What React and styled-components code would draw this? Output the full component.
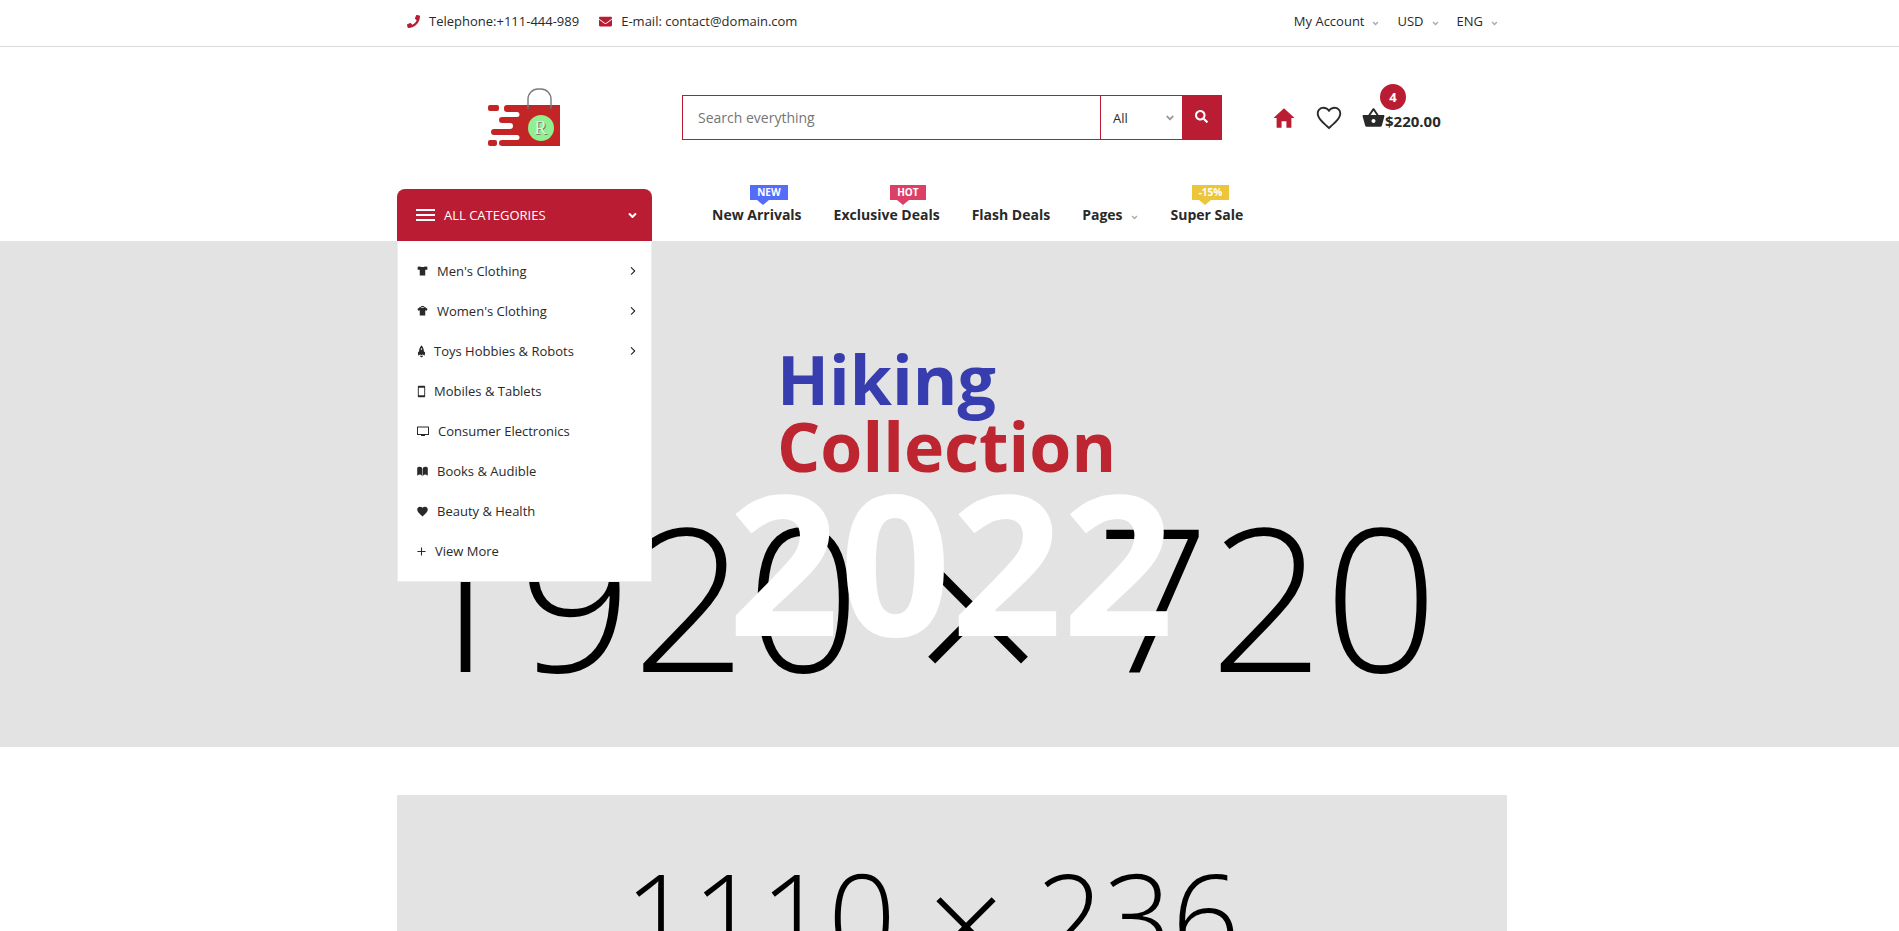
import React from "react";
import styled, { createGlobalStyle } from "styled-components";
import { FaPhone, FaEnvelope, FaSearch, FaAngleDown } from "react-icons/fa";
import {
  IoMdHome,
  IoMdHeartEmpty,
  IoMdBasket,
  IoMdPhonePortrait,
  IoIosBook,
  IoMdHeart,
  IoMdAdd,
  IoMdRocket,
  IoIosArrowForward,
} from "react-icons/io";

const red = "#b91c33";
const ink = "#292929";
const gray = "#e3e3e3";

const GlobalStyle = createGlobalStyle`
  *, *::before, *::after { box-sizing: border-box; }
  body {
    margin: 0;
    background: #fff;
    color: ${ink};
    font-family: "Open Sans", "Noto Sans", sans-serif;
    font-size: 13px;
    line-height: 20px;
    overflow-x: hidden;
  }
  a { color: inherit; text-decoration: none; }
  ul { list-style: none; margin: 0; padding: 0; }
  button, input, select { font: inherit; }
`;

const Page = styled.div`
  padding-left: 5px;
`;

const Container = styled.div`
  max-width: 1110px;
  margin: 0 auto;
`;

const FullWidth = styled.div`
  margin-left: -5px;
  padding-left: 5px;
`;

const TopBar = styled(FullWidth)`
  border-bottom: 1px solid #dadada;
`;

const TopBarInner = styled(Container)`
  display: flex;
  justify-content: space-between;
  align-items: center;
  height: 46px;
  padding: 0 8px 4px 10px;
`;

const ContactList = styled.ul`
  display: flex;
  gap: 20px;
`;

const ContactLink = styled.a`
  display: flex;
  align-items: center;
  gap: 9px;
  svg { color: ${red}; width: 13px; height: 13px; }
`;

const SettingsList = styled.ul`
  display: flex;
  gap: 17px;
`;

const PlainButton = styled.button`
  display: flex;
  align-items: center;
  padding: 0;
  border: 0;
  background: none;
  color: ${ink};
  cursor: pointer;
`;

const Caret = styled(FaAngleDown)`
  width: 9px;
  height: 9px;
  margin: 4px 0 0 7px;
  color: #aaa;
`;

const MainBar = styled(Container)`
  display: flex;
  align-items: center;
  height: 142px;
  padding-bottom: 1px;
`;

const LogoLink = styled.a`
  display: flex;
  width: 285px;
  padding-left: 90px;
`;

const SearchForm = styled.form`
  display: flex;
  flex: 0 1 540px;
  height: 45px;
  border: 1px solid ${red};
`;

const SearchInput = styled.input`
  flex: 1;
  min-width: 0;
  padding: 0 15px;
  border: 0;
  outline: 0;
  font-size: 14px;
  background: transparent;
  &::placeholder { color: #757575; opacity: 1; }
`;

const SelectWrap = styled.div`
  display: flex;
  align-items: center;
  width: 82px;
  border-left: 1px solid ${red};
  padding-right: 6px;
  svg { width: 12px; height: 12px; color: #999; pointer-events: none; }
`;

const Select = styled.select`
  flex: 1;
  min-width: 0;
  height: 100%;
  appearance: none;
  border: 0;
  outline: 0;
  padding: 0 0 0 12px;
  background: transparent;
  color: ${ink};
`;

const SearchButton = styled.button`
  display: grid;
  place-items: center;
  width: 39px;
  padding: 0 0 2px;
  border: 0;
  background: ${red};
  color: #fff;
  cursor: pointer;
  svg { width: 13px; height: 13px; }
`;

const Shortcuts = styled.nav`
  display: flex;
  align-items: center;
  gap: 17px;
  margin-left: 49px;
`;

const ShortcutLink = styled.a`
  display: flex;
  color: ${(p) => (p.$active ? red : ink)};
  svg { width: ${(p) => p.$size}px; height: ${(p) => p.$size}px; }
`;

const CartLink = styled.a`
  position: relative;
  display: flex;
  align-items: center;
  font-size: 15px;
  font-weight: 700;
  svg { width: 25px; height: 25px; }
`;

const CartTotal = styled.span`
  margin: 7px 0 0 -1px;
`;

const CartCount = styled.span`
  position: absolute;
  left: 19px;
  top: -20px;
  width: 26px;
  height: 26px;
  border-radius: 50%;
  background: ${red};
  color: #fff;
  font-size: 13px;
  line-height: 26px;
  text-align: center;
`;

const NavBar = styled(Container)`
  display: flex;
  align-items: flex-start;
  height: 52px;
`;

const CategoryBox = styled.div`
  position: relative;
  z-index: 2;
  width: 255px;
`;

const CategoryToggle = styled.button`
  display: flex;
  align-items: center;
  width: 100%;
  height: 52px;
  padding: 0 13px 0 19px;
  border: 0;
  border-radius: 8px 8px 0 0;
  background: ${red};
  color: #fff;
  cursor: pointer;
  span { flex: 1; margin-left: 9px; text-align: left; }
`;

const CategoryMenu = styled.ul`
  position: absolute;
  top: 100%;
  left: 0;
  right: 0;
  padding: 10px 0;
  border: 1px solid #ededed;
  border-top: 0;
  background: #fff;
`;

const CategoryLink = styled.a`
  display: flex;
  align-items: center;
  height: 40px;
  padding: 0 12px 0 19px;
`;

const CategoryIcon = styled.span`
  display: flex;
  justify-content: center;
  width: ${(p) => p.$width}px;
  svg { flex: none; }
`;

const CategoryLabel = styled.span`
  flex: 1;
  margin-left: 9px;
`;

const MenuLinks = styled.ul`
  display: flex;
  gap: 32px;
  margin-left: 60px;
  padding-top: 16px;
  font-size: 14px;
  font-weight: 700;
`;

const MenuItem = styled.li`
  position: relative;
  a { display: flex; align-items: center; }
`;

const Tag = styled.span`
  position: absolute;
  top: -20px;
  right: 14px;
  padding: 0 7px;
  background: ${(p) => p.$color};
  color: #fff;
  font-size: 10px;
  line-height: 15px;
  white-space: nowrap;
  &::after {
    content: "";
    position: absolute;
    top: 100%;
    left: 7px;
    border: 6px solid transparent;
    border-top: 5px solid ${(p) => p.$color};
    border-bottom: 0;
  }
`;

const Hero = styled(FullWidth)`
  display: grid;
  height: 506px;
  overflow: hidden;
  background: ${gray};
`;

const Placeholder = styled.div`
  grid-area: 1 / 1;
  display: flex;
  align-items: center;
  justify-content: center;
  height: ${(p) => p.$height}px;
  padding: ${(p) => p.$pad};
  background: ${gray};
  color: #000;
  font-size: ${(p) => p.$size}px;
  font-weight: 300;
  line-height: 1;
  white-space: pre;
`;

const Times = styled.span`
  font-size: 1.15em;
  line-height: 0;
  vertical-align: -0.1em;
`;

const HeroText = styled.div`
  grid-area: 1 / 1;
  justify-self: center;
  width: 448px;
  padding-top: 104px;
`;

const HeroTitle = styled.h1`
  margin: 0 0 0 49px;
  color: #bd2630;
  font-size: 68px;
  line-height: 67px;
  font-weight: 700;
  span { display: block; color: #373dae; }
`;

const HeroYear = styled.p`
  margin: 0;
  color: #fff;
  font-size: 195px;
  line-height: 164px;
  font-weight: 700;
`;

const Banner = styled(Container)`
  margin-top: 48px;
`;

const Logo = () => (
  <svg width="74" height="60" viewBox="0 0 74 60" aria-label="R shop">
    <g fill="#c32527">
      <rect x="1" y="17" width="11" height="6" rx="2" />
      <path d="M17 20a3 3 0 0 1 3-3h53v41H15a3 3 0 0 1 0-6h15a2.500 2.500 0 0 0 0-5H7a3 3 0 0 1 0-6h16a3 3 0 0 0 0-6h-8a3 3 0 0 1 0-6h15a2.500 2.500 0 0 0 0-5H20a3 3 0 0 1-3-3z" />
      <rect x="1" y="52" width="9" height="6" rx="2" />
    </g>
    <path d="M41 20V11a10 10 0 0 1 10-10h3a10 10 0 0 1 10 10v9" fill="none" stroke="#7b7b7b" strokeWidth="1.4" />
    <circle cx="41" cy="20" r="1.3" fill="#666" />
    <circle cx="64" cy="20" r="1.3" fill="#666" />
    <circle cx="54" cy="40" r="13" fill="#90f090" />
    <text x="54.5" y="47" textAnchor="middle" fontFamily="Liberation Serif, serif" fontSize="19" fill="#777">R</text>
    <text x="53.5" y="46" textAnchor="middle" fontFamily="Liberation Serif, serif" fontSize="19" fill="#d8f8d8">R</text>
  </svg>
);

const BarsIcon = () => (
  <svg width="19" height="12" viewBox="0 0 19 12" fill="#fff" aria-hidden="true">
    <rect width="19" height="2" />
    <rect y="5" width="19" height="2" />
    <rect y="10" width="19" height="2" />
  </svg>
);

const TeeIcon = () => (
  <svg width="11" height="12" viewBox="0 0 12 12" fill="currentColor" aria-hidden="true">
    <path d="M.7 1.3 3.6 1c.5 1 4.300 1 4.800 0l2.900.3v3.200H9V11H3V4.500H.7z" />
  </svg>
);

const BlouseIcon = () => (
  <svg width="11" height="12" viewBox="0 0 12 12" fill="currentColor" aria-hidden="true">
    <path d="M.5 3.800 3.600 1.300C4.500 2.700 7.500 2.700 8.400 1.300l3.100 2.500-.9 1.900L9 5.300V11H3V5.300l-1.600.4z" />
    <path d="M4 1c1-.6 3-.6 4 0-.7 1-3.300 1-4 0z" />
  </svg>
);

const ScreenIcon = () => (
  <svg width="12" height="12" viewBox="0 0 12 12" fill="currentColor" aria-hidden="true">
    <path fillRule="evenodd" d="M.5 1.500h11q.5 0 .5.500v7.500q0 .5-.5.500H8v1H4v-1H.5Q0 10 0 9.500V2q0-.5.5-.5zM1 2.500V9h10V2.500z" />
  </svg>
);

const categories = [
  { label: "Men's Clothing", Icon: TeeIcon, width: 11, more: true },
  { label: "Women's Clothing", Icon: BlouseIcon, width: 11, more: true },
  { label: "Toys Hobbies & Robots", Icon: IoMdRocket, width: 8, size: 13, more: true },
  { label: "Mobiles & Tablets", Icon: IoMdPhonePortrait, width: 8, size: 13 },
  { label: "Consumer Electronics", Icon: ScreenIcon, width: 12 },
  { label: "Books & Audible", Icon: IoIosBook, width: 11, size: 13 },
  { label: "Beauty & Health", Icon: IoMdHeart, width: 11, size: 13 },
  { label: "View More", Icon: IoMdAdd, width: 9, size: 13 },
];

const menu = [
  { label: "New Arrivals", tag: "NEW", color: "#546cfa" },
  { label: "Exclusive Deals", tag: "HOT", color: "#dc4067" },
  { label: "Flash Deals" },
  { label: "Pages", caret: true },
  { label: "Super Sale", tag: "-15%", color: "#ebc63a" },
];

export default function App() {
  return (
    <Page>
      <GlobalStyle />
      <header>
        <TopBar>
          <TopBarInner>
            <ContactList>
              <li><ContactLink href="tel:+111444989"><FaPhone />Telephone:+111-444-989</ContactLink></li>
              <li><ContactLink href="mailto:contact@domain.com"><FaEnvelope />E-mail: contact@domain.com</ContactLink></li>
            </ContactList>
            <SettingsList>
              {["My Account", "USD", "ENG"].map((label) => (
                <li key={label}><PlainButton type="button">{label}<Caret /></PlainButton></li>
              ))}
            </SettingsList>
          </TopBarInner>
        </TopBar>
        <MainBar>
          <LogoLink href="#"><Logo /></LogoLink>
          <SearchForm role="search">
            <SearchInput type="text" placeholder="Search everything" aria-label="Search everything" />
            <SelectWrap>
              <Select aria-label="Category"><option>All</option></Select>
              <FaAngleDown />
            </SelectWrap>
            <SearchButton type="button" aria-label="Search"><FaSearch /></SearchButton>
          </SearchForm>
          <Shortcuts>
            <ShortcutLink href="#" $active $size={26} aria-label="Home"><IoMdHome /></ShortcutLink>
            <ShortcutLink href="#" $size={30} aria-label="Wishlist"><IoMdHeartEmpty /></ShortcutLink>
            <CartLink href="#">
              <IoMdBasket />
              <CartCount>4</CartCount>
              <CartTotal>$220.00</CartTotal>
            </CartLink>
          </Shortcuts>
        </MainBar>
        <NavBar>
          <CategoryBox>
            <CategoryToggle type="button"><BarsIcon /><span>ALL CATEGORIES</span><FaAngleDown /></CategoryToggle>
            <CategoryMenu>
              {categories.map(({ label, Icon, width, size, more }) => (
                <li key={label}>
                  <CategoryLink href="#">
                    <CategoryIcon $width={width}><Icon size={size} /></CategoryIcon>
                    <CategoryLabel>{label}</CategoryLabel>
                    {more && <IoIosArrowForward size={12} />}
                  </CategoryLink>
                </li>
              ))}
            </CategoryMenu>
          </CategoryBox>
          <MenuLinks>
            {menu.map(({ label, tag, color, caret }) => (
              <MenuItem key={label}>
                <a href="#">{label}{caret && <Caret />}</a>
                {tag && <Tag $color={color}>{tag}</Tag>}
              </MenuItem>
            ))}
          </MenuLinks>
        </NavBar>
      </header>
      <main>
        <Hero>
          <Placeholder $height={720} $size={200} $pad="0 62px 12px 0">
            <span>1920 <Times>×</Times> 720</span>
          </Placeholder>
          <HeroText>
            <HeroTitle><span>Hiking</span>Collection</HeroTitle>
            <HeroYear>2022</HeroYear>
          </HeroText>
        </Hero>
        <Banner>
          <Placeholder $height={236} $size={119} $pad="4px 40px 0 0">
            <span>1110 <Times>×</Times> 236</span>
          </Placeholder>
        </Banner>
      </main>
    </Page>
  );
}
